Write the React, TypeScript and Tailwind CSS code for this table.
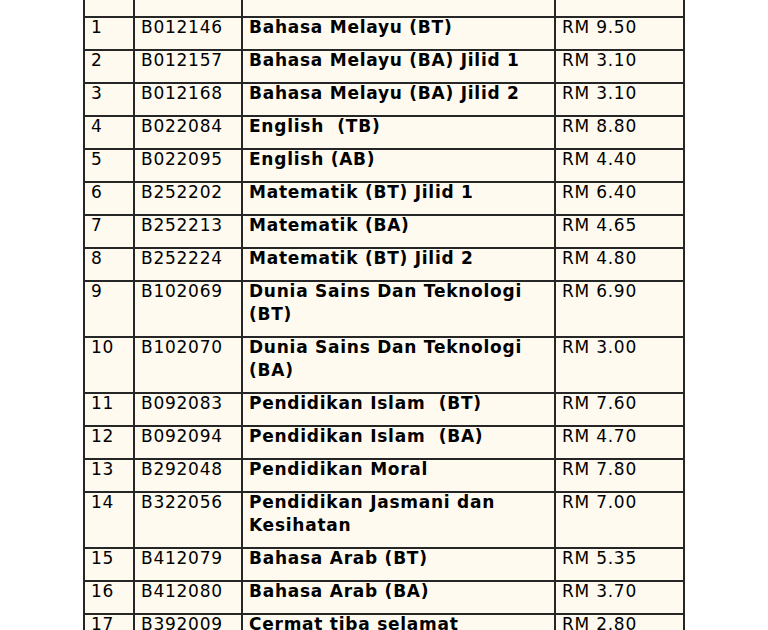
const books = [
  { no: '1', code: 'B012146', title: 'Bahasa Melayu (BT)', price: 'RM 9.50' },
  { no: '2', code: 'B012157', title: 'Bahasa Melayu (BA) Jilid 1', price: 'RM 3.10' },
  { no: '3', code: 'B012168', title: 'Bahasa Melayu (BA) Jilid 2', price: 'RM 3.10' },
  { no: '4', code: 'B022084', title: 'English  (TB)', price: 'RM 8.80' },
  { no: '5', code: 'B022095', title: 'English (AB)', price: 'RM 4.40' },
  { no: '6', code: 'B252202', title: 'Matematik (BT) Jilid 1', price: 'RM 6.40' },
  { no: '7', code: 'B252213', title: 'Matematik (BA)', price: 'RM 4.65' },
  { no: '8', code: 'B252224', title: 'Matematik (BT) Jilid 2', price: 'RM 4.80' },
  { no: '9', code: 'B102069', title: 'Dunia Sains Dan Teknologi (BT)', price: 'RM 6.90' },
  { no: '10', code: 'B102070', title: 'Dunia Sains Dan Teknologi (BA)', price: 'RM 3.00' },
  { no: '11', code: 'B092083', title: 'Pendidikan Islam  (BT)', price: 'RM 7.60' },
  { no: '12', code: 'B092094', title: 'Pendidikan Islam  (BA)', price: 'RM 4.70' },
  { no: '13', code: 'B292048', title: 'Pendidikan Moral', price: 'RM 7.80' },
  { no: '14', code: 'B322056', title: 'Pendidikan Jasmani dan Kesihatan', price: 'RM 7.00' },
  { no: '15', code: 'B412079', title: 'Bahasa Arab (BT)', price: 'RM 5.35' },
  { no: '16', code: 'B412080', title: 'Bahasa Arab (BA)', price: 'RM 3.70' },
  { no: '17', code: 'B392009', title: 'Cermat tiba selamat', price: 'RM 2.80' },
]

const cell = 'border-2 border-[#262626] align-top px-[6px] pt-0 pb-[10px]'

const App = function() {
  return (
    <div className="h-[630px] overflow-hidden bg-white flex justify-center font-['DejaVu_Sans',sans-serif] text-[17px] tracking-[0.75px] leading-[23px] text-black">
      <table className="table-fixed border-collapse w-[600px] h-fit bg-[#fefaf0]">
        <colgroup>
          <col className="w-[50px]" />
          <col className="w-[108px]" />
          <col className="w-[313px]" />
          <col className="w-[129px]" />
        </colgroup>
        <tbody>
          <tr>
            <td className="border-2 border-t-0 border-[#262626] h-[17px] p-0"></td>
            <td className="border-2 border-t-0 border-[#262626] h-[17px] p-0"></td>
            <td className="border-2 border-t-0 border-[#262626] h-[17px] p-0"></td>
            <td className="border-2 border-t-0 border-[#262626] h-[17px] p-0"></td>
          </tr>
          {books.map((b) => (
            <tr key={b.no}>
              <td className={cell}><div className="-mt-[2px]">{b.no}</div></td>
              <td className={cell}><div className="-mt-[2px]">{b.code}</div></td>
              <td className={cell + ' font-bold whitespace-pre-wrap'}><div className="-mt-[2px]">{b.title}</div></td>
              <td className={cell}><div className="-mt-[2px]">{b.price}</div></td>
            </tr>
          ))}
        </tbody>
      </table>
    </div>
  )
}

export default App
